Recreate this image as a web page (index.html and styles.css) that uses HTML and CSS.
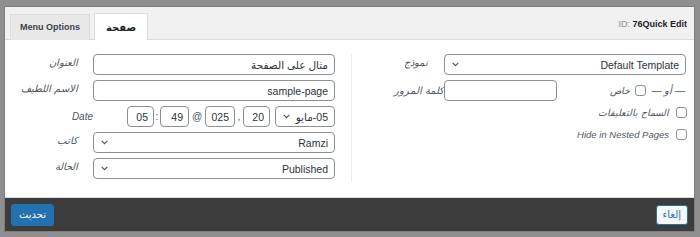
FILE: index.html
```html
<!DOCTYPE html>
<html lang="ar">

<head>
	<meta charset="utf-8" />
	<title>Quick Edit</title>
	<link rel="stylesheet" href="styles.css">
</head>

<body>
	<div class="modal">
		<div class="head">
			<div class="tabs">
				<div class="tab">Menu Options</div>
				<div class="tab active">صفحة</div>
			</div>
			<div class="post-id"><span class="muted">ID:</span> <strong>76Quick Edit</strong></div>
		</div>

		<div class="body">
			<div class="col-left">
				<label class="title">العنوان</label>
				<input class="field" type="text" dir="rtl" value="مثال على الصفحة">

				<label class="title">الاسم اللطيف</label>
				<input class="field" type="text" dir="rtl" value="sample-page">

				<label class="title date-title">Date</label>
				<div class="date-row" dir="rtl">
					<div class="select month"><span>05-مايو</span>
						<svg width="7" height="5" viewBox="0 0 7 5"><path d="M0.7 0.8l2.8 2.8 2.8-2.8" fill="none" stroke="#50575e" stroke-width="1.2"></path></svg>
					</div>
					<input class="field small day" type="text" value="20">
					<span class="sep comma">,</span>
					<input class="field small year" type="text" value="025">
					<span class="sep at">@</span>
					<input class="field small hour" type="text" value="49">
					<span class="sep colon">:</span>
					<input class="field small day" type="text" value="05">
				</div>

				<label class="title">كاتب</label>
				<div class="select" dir="rtl"><span>Ramzi</span>
					<svg width="7" height="5" viewBox="0 0 7 5"><path d="M0.7 0.8l2.8 2.8 2.8-2.8" fill="none" stroke="#50575e" stroke-width="1.2"></path></svg>
				</div>

				<label class="title">الحالة</label>
				<div class="select" dir="rtl"><span>Published</span>
					<svg width="7" height="5" viewBox="0 0 7 5"><path d="M0.7 0.8l2.8 2.8 2.8-2.8" fill="none" stroke="#50575e" stroke-width="1.2"></path></svg>
				</div>
			</div>

			<div class="col-right">
				<div class="row template-row">
					<label class="title">نموذج</label>
					<div class="select" dir="rtl"><span>Default Template</span>
						<svg width="7" height="5" viewBox="0 0 7 5"><path d="M0.7 0.8l2.8 2.8 2.8-2.8" fill="none" stroke="#50575e" stroke-width="1.2"></path></svg>
					</div>
				</div>
				<div class="row password-row">
					<label class="title pass-title">كلمة المرور</label>
					<div class="pass-cell">
						<input class="field pass" type="text" value="">
						<div class="private">
							<span class="check-title">خاص</span>
							<input class="check" type="checkbox">
							<em class="or" dir="rtl">— أو —</em>
						</div>
					</div>
				</div>
				<div class="check-row">
					<span class="check-title">السماح بالتعليقات</span>
					<input class="check" type="checkbox">
				</div>
				<div class="check-row">
					<span class="check-title">Hide in Nested Pages</span>
					<input class="check" type="checkbox">
				</div>
			</div>
		</div>

		<div class="foot">
			<button class="btn primary">تحديث</button>
			<button class="btn secondary">إلغاء</button>
		</div>
	</div>
</body>

</html>
```

FILE: styles.css
```css
body {
	margin: 0;
	padding: 7px 6px 6px 5px;
	background: #8f8f8f;
	font-family: "Liberation Sans", "DejaVu Sans", sans-serif;
	font-size: 10px;
	color: #2c3338;
}

.modal {
	width: 689px;
	display: flex;
	flex-direction: column;
	box-shadow: 0 0 0 1px rgba(0, 0, 0, 0.12);
}

.head {
	height: 32px;
	background: #f1f1f1;
	border-bottom: 1px solid #dcdcde;
	display: flex;
	justify-content: space-between;
	align-items: flex-end;
	padding: 0 7px 0 5px;
}

.tabs {
	display: flex;
	align-items: flex-end;
	gap: 4px;
	margin-bottom: -1px;
}

.tab {
	height: 25px;
	line-height: 25px;
	padding: 0 9px;
	border: 1px solid #dcdcde;
	border-bottom: 0;
	background: #e8e8e8;
	color: #3c434a;
	font-size: 9px;
	font-weight: bold;
}

.tab.active {
	height: 26px;
	line-height: 27px;
	padding: 0 11px;
	background: #fff;
	color: #1d2327;
	font-size: 10px;
}

.post-id {
	align-self: center;
	font-size: 9px;
	color: #1d2327;
	padding-top: 1px;
}

.muted {
	color: #8c8f94;
}

.body {
	height: 157px;
	box-sizing: border-box;
	background: #fff;
	display: flex;
	padding: 14px 0 0 5px;
}

.col-left {
	width: 325px;
	height: 128px;
	padding-right: 16px;
	border-right: 1px solid #ececec;
	display: grid;
	grid-template-columns: 83px 242px;
	grid-auto-rows: 21px;
	row-gap: 5px;
	align-content: start;
}

.title {
	font-style: italic;
	color: #50575e;
	text-align: right;
	padding: 3px 15px 0 0;
	line-height: 12px;
}

.date-title {
	padding-right: 0;
	padding-top: 5px;
}

.field {
	box-sizing: border-box;
	height: 21px;
	margin: 0;
	padding: 0 6px;
	border: 1px solid #8c8f94;
	border-radius: 4px;
	background: #fff;
	font-family: inherit;
	font-size: 10.5px;
	color: #2c3338;
	text-align: right;
	outline: none;
}

.select {
	box-sizing: border-box;
	height: 21px;
	display: flex;
	align-items: center;
	padding: 0 6px 0 7px;
	border: 1px solid #8c8f94;
	border-radius: 4px;
	background: #fff;
	font-size: 10.5px;
	color: #2c3338;
}

.select svg {
	margin-right: auto;
}

.date-row {
	display: flex;
	align-items: center;
	justify-content: flex-start;
}

.small {
	width: 27px;
	padding: 0 5px;
}

.small.year {
	width: 30px;
}

.small.hour {
	width: 29px;
}

.month {
	width: 60px;
	margin-left: 5px;
}

.sep {
	text-align: center;
	color: #50575e;
	font-size: 10px;
}

.comma {
	width: 8px;
}

.at {
	width: 16px;
}

.colon {
	width: 6px;
}

.col-right {
	flex: 1;
	display: flex;
	flex-direction: column;
}

.row {
	display: grid;
	grid-template-columns: 92px 242px;
	height: 21px;
}

.template-row {
	margin-bottom: 5px;
}

.template-row .title {
	padding-right: 16px;
}

.pass-title {
	padding: 5px 0 0;
	white-space: nowrap;
}

.pass-cell {
	display: flex;
	align-items: center;
}

.pass {
	width: 113px;
}

.private {
	margin-left: auto;
	margin-right: 1px;
	display: flex;
	align-items: center;
	gap: 5px;
}

.or {
	color: #50575e;
	font-size: 10px;
}

.check-row {
	height: 22px;
	display: flex;
	align-items: center;
	justify-content: flex-end;
	gap: 7px;
	padding-right: 7px;
}

.check-title {
	font-style: italic;
	color: #50575e;
	font-size: 9.5px;
}

.check {
	appearance: none;
	width: 11px;
	height: 11px;
	margin: 0;
	border: 1px solid #8c8f94;
	border-radius: 3px;
	background: #fff;
}

.foot {
	height: 34px;
	box-sizing: border-box;
	background: #3c3c3c;
	border-top: 1px solid #dcdcde;
	display: flex;
	justify-content: space-between;
	align-items: center;
	padding: 0 6px;
}

.btn {
	font-family: inherit;
	font-size: 10px;
	border-radius: 3px;
	margin: 0;
}

.primary {
	height: 22px;
	padding: 0 7px;
	background: #2271b1;
	border: 1px solid #2271b1;
	color: #fff;
}

.secondary {
	height: 20px;
	padding: 0 6px;
	background: #f6f7f7;
	border: 1px solid #2271b1;
	color: #2271b1;
}
```
